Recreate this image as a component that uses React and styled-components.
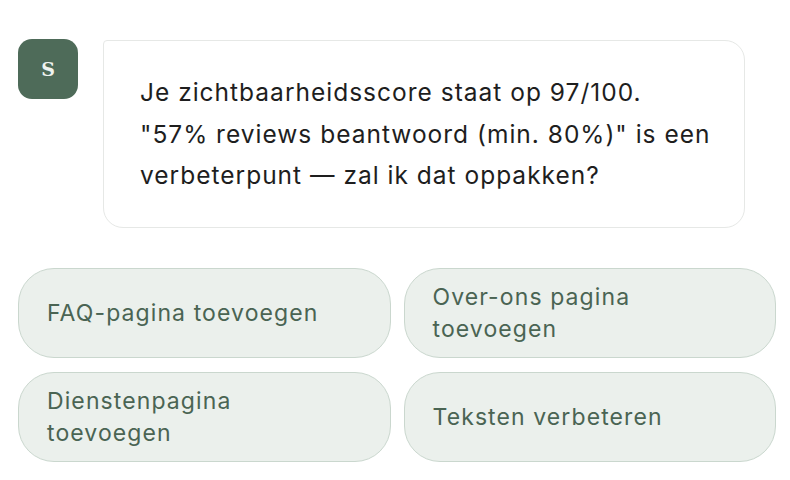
import styled, { createGlobalStyle } from "styled-components";

const GlobalStyle = createGlobalStyle`
  body {
    margin: 0;
    background: #ffffff;
    font-family: Inter, "Noto Sans", sans-serif;
  }
`;

const Page = styled.div`
  padding: 39px 14px 0 18px;
`;

const MessageRow = styled.div`
  display: flex;
  align-items: flex-start;
  gap: 25px;
`;

const Avatar = styled.div`
  width: 60px;
  height: 60px;
  flex-shrink: 0;
  border-radius: 14px;
  background: #4e6b59;
  color: #eef3ef;
  display: flex;
  align-items: center;
  justify-content: center;
  font-family: "DejaVu Serif", "Liberation Serif", serif;
  font-weight: 700;
  font-size: 19px;
`;

const Bubble = styled.div`
  margin-top: 1px;
  width: 642px;
  box-sizing: border-box;
  padding: 31px 30px 30px 36px;
  background: #ffffff;
  border: 1px solid #e6e8e6;
  border-radius: 4px 20px 20px 20px;
  color: #1e1e1e;
  font-size: 24.5px;
  letter-spacing: 1px;
  line-height: 41.5px;
`;

const Suggestions = styled.div`
  margin-top: 40px;
  display: grid;
  grid-template-columns: 1fr 1fr;
  column-gap: 13px;
  row-gap: 14px;
`;

const Chip = styled.button`
  height: 90px;
  box-sizing: border-box;
  padding: 0 28px;
  text-align: left;
  background: #ebf0ec;
  border: 1.5px solid #cad7ce;
  border-radius: 36px;
  color: #4a6453;
  font-family: Inter, "Noto Sans", sans-serif;
  font-size: 23px;
  letter-spacing: 1.1px;
  line-height: 32px;
  cursor: pointer;
`;

const suggestions = [
  "FAQ-pagina toevoegen",
  "Over-ons pagina toevoegen",
  "Dienstenpagina toevoegen",
  "Teksten verbeteren",
];

const App = () => {
  return (
    <Page>
      <GlobalStyle />
      <MessageRow>
        <Avatar>S</Avatar>
        <Bubble>
          Je zichtbaarheidsscore staat op 97/100. "57% reviews beantwoord
          (min. 80%)" is een verbeterpunt — zal ik dat oppakken?
        </Bubble>
      </MessageRow>
      <Suggestions>
        {suggestions.map((label) => (
          <Chip key={label}>{label}</Chip>
        ))}
      </Suggestions>
    </Page>
  );
};

export default App;
